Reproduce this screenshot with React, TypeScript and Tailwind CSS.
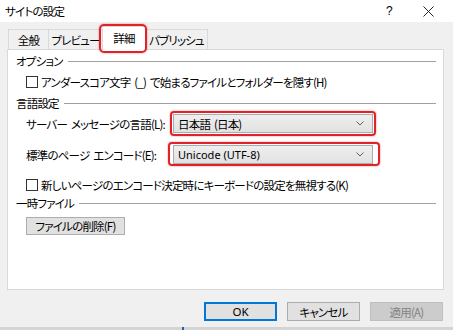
import React from "react";

const font = "font-['Noto_Sans_CJK_JP','Noto_Sans',sans-serif] [font-feature-settings:'palt']";

function Chevron() {
  return (
    <svg width="8" height="5" viewBox="0 0 8 5" className="shrink-0">
      <path d="M0.5 0.5 L4 4 L7.5 0.5" fill="none" stroke="#606060" strokeWidth="1" />
    </svg>
  );
}

function Checkbox() {
  return <div className="w-[12px] h-[12px] border border-[#333333] bg-white shrink-0" />;
}

function GroupHeader({ label }: { label: string }) {
  return (
    <div className="flex items-center h-[14px] pl-[8px] pr-[7px] gap-[5px]">
      <span className="leading-[14px] whitespace-nowrap">{label}</span>
      <div className="flex-1 h-px bg-[#a0a0a0]" />
    </div>
  );
}

export default function App() {
  return (
    <div className={`w-[453px] h-[330px] bg-[#f0f0f0] flex flex-col text-[11.5px] tracking-[-0.8px] [word-spacing:2px] text-black overflow-hidden ${font}`}>
      {/* Title bar */}
      <div className="h-[22px] bg-white flex items-center pl-[5px] shrink-0">
        <span className="leading-[14px] flex-1 whitespace-nowrap">サイトの設定</span>
        <span className="w-[20px] text-center leading-[14px] text-[12px] mr-[24px] font-['Liberation_Sans',sans-serif]">?</span>
        <svg width="11" height="11" viewBox="0 0 11 11" className="mr-[19px]">
          <path d="M0.5 0.5 L10.5 10.5 M10.5 0.5 L0.5 10.5" stroke="#222" strokeWidth="1" />
        </svg>
      </div>

      {/* Tabs */}
      <div className="h-[28px] flex items-end pl-[8px] shrink-0 whitespace-nowrap">
        <div className="w-[41px] h-[21px] border border-b-0 border-[#d9d9d9] flex items-center justify-center leading-[14px]">全般</div>
        <div className="w-[54px] h-[21px] border border-b-0 border-l-0 border-[#d9d9d9] flex items-center justify-center leading-[14px]">プレビュー</div>
        <div className="relative z-10 w-[43px] h-[24px] bg-white border border-b-0 border-l-0 border-[#d9d9d9] flex items-center justify-center leading-[14px] pb-[2px]">
          詳細
          <div className="absolute left-[-4px] right-[-2px] top-[-3px] bottom-[-3px] border-2 border-[#e0232b] rounded-[5px] shadow-[0_0_2px_rgba(200,0,0,0.5)]" />
        </div>
        <div className="w-[62px] h-[21px] border border-b-0 border-l-0 border-[#d9d9d9] flex items-center justify-center leading-[14px]">パブリッシュ</div>
      </div>

      {/* Panel */}
      <div className="-mt-px ml-[7px] w-[437px] h-[241px] bg-white border border-[#d9d9d9] flex flex-col pt-[4px] shrink-0 whitespace-nowrap">
        <GroupHeader label="オプション" />
        <div className="mt-[7px] h-[14px] flex items-center pl-[18px] gap-[3px]">
          <Checkbox />
          <span className="leading-[14px]">アンダースコア文字 (_) で始まるファイルとフォルダーを隠す(H)</span>
        </div>
        <div className="mt-[7px]">
          <GroupHeader label="言語設定" />
        </div>

        {/* Select row 1 */}
        <div className="mt-[4px] h-[19px] flex items-center pl-[18px]">
          <span className="w-[147px] shrink-0 leading-[14px]">サーバー メッセージの言語(L):</span>
          <div className="relative w-[200px] h-[19px]">
            <div className="w-full h-full bg-gradient-to-b from-[#eeeeee] to-[#e2e2e2] border border-[#acacac] flex items-center pl-[4px] pr-[8px]">
              <span className="flex-1 leading-[14px]">日本語 (日本)</span>
              <Chevron />
            </div>
            <div className="absolute left-[-3px] right-[-3px] top-[-3px] bottom-[-3px] border-2 border-[#e0232b] rounded-[4px] shadow-[0_0_2px_rgba(200,0,0,0.5)]" />
          </div>
        </div>

        {/* Select row 2 */}
        <div className="mt-[12px] h-[19px] flex items-center pl-[18px]">
          <span className="w-[147px] shrink-0 leading-[14px]">標準のページ エンコード(E):</span>
          <div className="relative w-[200px] h-[19px]">
            <div className="w-full h-full bg-gradient-to-b from-[#eeeeee] to-[#e2e2e2] border border-[#acacac] flex items-center pl-[4px] pr-[8px]">
              <span className="flex-1 leading-[14px] tracking-[0px] [word-spacing:0px] text-[11px] font-['Noto_Sans','Noto_Sans_CJK_JP',sans-serif]">Unicode (UTF-8)</span>
              <Chevron />
            </div>
            <div className="absolute left-[-5px] right-[-7px] top-[-3px] bottom-[-2px] border-2 border-[#e0232b] rounded-[4px] shadow-[0_0_2px_rgba(200,0,0,0.5)]" />
          </div>
        </div>

        <div className="mt-[14px] h-[14px] flex items-center pl-[18px] gap-[3px]">
          <Checkbox />
          <span className="leading-[14px]">新しいページのエンコード決定時にキーボードの設定を無視する(K)</span>
        </div>
        <div className="mt-[4px]">
          <GroupHeader label="一時ファイル" />
        </div>
        <div className="mt-[7px] pl-[18px]">
          <div className="w-[99px] h-[18px] bg-[#e1e1e1] border border-[#adadad] flex items-center justify-center leading-[14px]">ファイルの削除(F)</div>
        </div>
      </div>

      {/* Buttons */}
      <div className="mt-[12px] h-[19px] flex justify-end gap-[10px] pr-[10px] shrink-0 whitespace-nowrap">
        <div className="w-[73px] h-[19px] bg-[#e1e1e1] border-2 border-[#0078d7] flex items-center justify-center leading-[14px] tracking-[0px] font-['Noto_Sans','Noto_Sans_CJK_JP',sans-serif]">OK</div>
        <div className="w-[73px] h-[19px] bg-[#e1e1e1] border border-[#adadad] flex items-center justify-center leading-[14px]">キャンセル</div>
        <div className="w-[73px] h-[19px] bg-[#cccccc] border border-[#bfbfbf] flex items-center justify-center leading-[14px] text-[#838383]">適用(A)</div>
      </div>

      <div className="mt-[6px] h-[3px] bg-[#d4d4d4] flex shrink-0">
        <div className="ml-[182px] w-[2px] h-full bg-[#2b59c3]" />
      </div>
    </div>
  );
}
